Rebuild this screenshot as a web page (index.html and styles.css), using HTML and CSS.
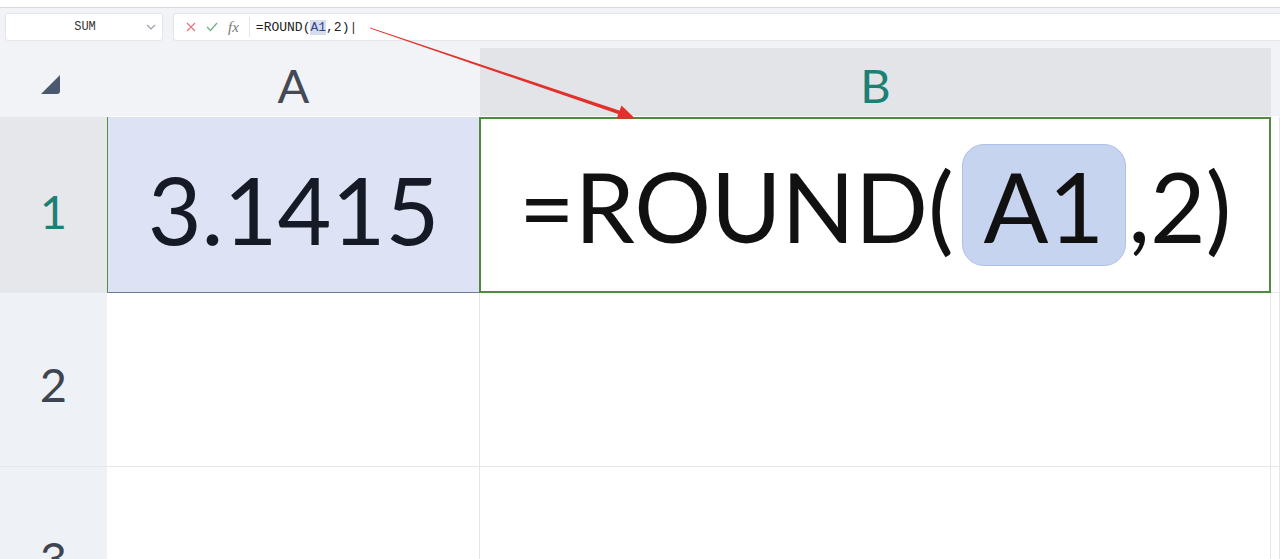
FILE: index.html
```html
<!DOCTYPE html>
<html lang="en">
<head>
    <meta charset="UTF-8">
    <meta name="viewport" content="width=device-width, initial-scale=1.0">
    <title>ROUND</title>
    <link rel="stylesheet" href="styles.css">
</head>
<body>
    <div class="page">
        <div class="topstrip"></div>

        <div class="fbar">
            <div class="namebox">
                <span class="name">SUM</span>
                <svg class="chev" width="10" height="6" viewBox="0 0 10 6"><polyline points="1,1 5,5 9,1" fill="none" stroke="#9aa0a8" stroke-width="1.2"/></svg>
            </div>
            <div class="formula">
                <div class="tools">
                    <svg width="10" height="10" viewBox="0 0 10 10"><path d="M1 1L9 9M9 1L1 9" stroke="#e27a80" stroke-width="1.3"/></svg>
                    <svg width="12" height="10" viewBox="0 0 12 10"><polyline points="1,5 4.5,8.5 11,1" fill="none" stroke="#6ab38e" stroke-width="1.3"/></svg>
                    <span class="fx">fx</span>
                </div>
                <div class="input">=ROUND(<span class="ref">A1</span>,2)<span class="caret">|</span></div>
            </div>
        </div>

        <div class="sheet">
            <div class="corner"><span class="tri"></span></div>
            <div class="colhead">A</div>
            <div class="colhead sel">B</div>
            <div class="colhead"></div>

            <div class="rowhead sel">1</div>
            <div class="cell a1">3.1415</div>
            <div class="cell b1">=ROUND(<span class="chip">A1</span>,2)</div>
            <div class="cell"></div>

            <div class="rowhead">2</div>
            <div class="cell"></div>
            <div class="cell"></div>
            <div class="cell"></div>

            <div class="rowhead">3</div>
            <div class="cell"></div>
            <div class="cell"></div>
            <div class="cell"></div>
        </div>

        <svg class="arrow" width="1280" height="140" viewBox="0 0 1280 140">
            <polygon points="370,27.6 370.3,28.4 619.5,114.6 620.7,111.1" fill="#e3302b"/>
            <polygon points="635,118.5 616.5,119 621.5,105.5" fill="#e3302b"/>
        </svg>
    </div>
</body>
</html>
```

FILE: styles.css
```css
body{
    margin:0;
    background:#fff;
    font-family:Lato,"Noto Sans",sans-serif;
}
.page{
    position:relative;
    width:1280px;
    height:559px;
    overflow:hidden;
    background:#f1f3f6;
}
.topstrip{
    height:7px;
    background:#fff;
    border-bottom:1px solid #d6d9de;
}
.fbar{
    display:flex;
    gap:10px;
    padding:5px 0 0 5px;
    height:28px;
}
.namebox{
    display:flex;
    align-items:center;
    width:158px;
    background:#fff;
    border:1px solid #e3e6ea;
    border-radius:3px;
    box-sizing:border-box;
}
.name{
    flex:1;
    padding-left:18px;
    text-align:center;
    font-family:"Liberation Mono",monospace;
    font-size:12px;
    color:#333;
}
.chev{
    margin-right:6px;
}
.formula{
    display:flex;
    align-items:center;
    flex:1;
    background:#fff;
    border:1px solid #e3e6ea;
    border-right:0;
    border-radius:3px 0 0 3px;
}
.tools{
    display:flex;
    align-items:center;
    gap:10px;
    height:20px;
    padding:0 10px 0 12px;
    border-right:1px solid #e3e6ea;
}
.fx{
    font-family:"Liberation Serif",serif;
    font-style:italic;
    font-size:15px;
    color:#777;
}
.input{
    padding-left:6px;
    font-family:"Liberation Mono",monospace;
    font-size:13px;
    color:#222;
}
.ref{
    background:#d7ddef;
    color:#33458a;
}
.caret{
    color:#333;
}
.sheet{
    display:grid;
    grid-template-columns:107px 373px 791px 1fr;
    grid-template-rows:69px 176px 174px 174px;
    margin-top:7px;
}
.corner{
    display:flex;
    align-items:center;
    justify-content:center;
    padding:4px 6px 0 0;
}
.tri{
    width:0;
    height:0;
    border-left:19px solid transparent;
    border-bottom:19px solid #4b5970;
    border-radius:0 0 3px 0;
}
.colhead{
    display:flex;
    align-items:center;
    justify-content:center;
    padding-top:6px;
    font-size:47px;
    color:#444a55;
    border-bottom:1px solid #fbfbfc;
}
.colhead.sel{
    background:#e2e4e8;
    color:#1d8074;
}
.rowhead{
    display:flex;
    align-items:center;
    justify-content:center;
    padding-top:8px;
    font-size:47px;
    color:#3e4450;
    background:#eef2f6;
    border-bottom:1px solid #e3e6ea;
}
.rowhead.sel{
    padding-top:12px;
    background:#e6e7ea;
    color:#1d8074;
}
.cell{
    background:#fff;
    border-right:1px solid #e3e5e8;
    border-bottom:1px solid #e6e8eb;
}
.a1{
    display:flex;
    align-items:center;
    justify-content:center;
    padding-top:8px;
    background:#dde3f4;
    border-left:1px solid #5a8c48;
    border-bottom:1px solid #6c7b9c;
    font-size:93px;
    color:#151a26;
}
.b1{
    display:flex;
    align-items:center;
    padding-left:38px;
    border:2px solid #4f8a3f;
    margin-left:-1px;
    font-size:96px;
    color:#111;
}
.chip{
    display:inline-flex;
    align-items:center;
    height:120px;
    padding:0 21px;
    margin:0 2px 0 8px;
    background:#c7d4f0;
    border:1px solid #adc0e6;
    border-radius:22px;
}
.arrow{
    position:absolute;
    top:0;
    left:0;
    pointer-events:none;
}
```
